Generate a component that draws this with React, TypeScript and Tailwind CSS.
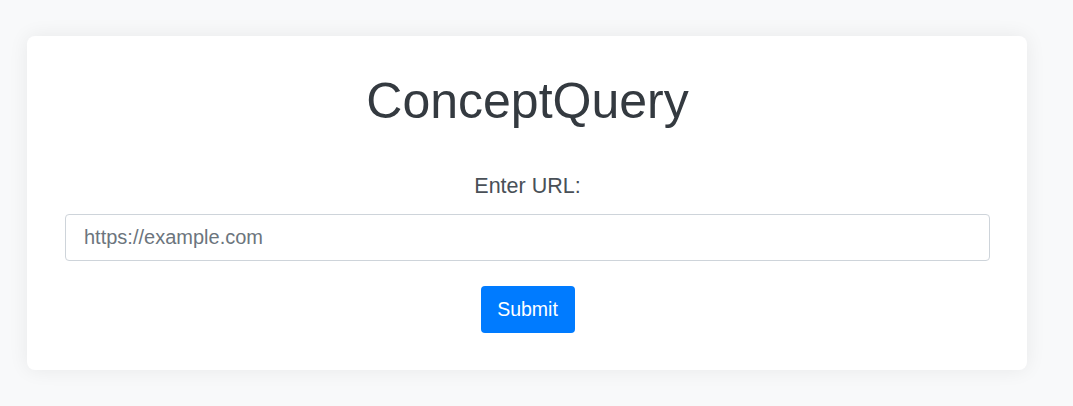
import React, { useState } from 'react';

export default function App() {
  const [url, setUrl] = useState('');

  return (
    <div className="min-h-screen bg-[#f8f9fa] pt-[36px] pl-[27px]" style={{ fontFamily: '"Liberation Sans", Arial, sans-serif' }}>
      <div className="w-[1000px] bg-white rounded-lg shadow-[0_0_20px_rgba(0,0,0,0.07)] pt-[36px] pb-[37px] pl-[38px] pr-[37px]">
        <h1 className="text-center text-[50px] leading-[58px] text-[#343a40]">ConceptQuery</h1>
        <form
          className="mt-[41px] flex flex-col items-center"
          onSubmit={(e) => e.preventDefault()}
        >
          <label htmlFor="url" className="text-[21.5px] leading-[30px] text-[#495057]">
            Enter URL:
          </label>
          <input
            id="url"
            type="text"
            value={url}
            onChange={(e) => setUrl(e.target.value)}
            placeholder="https://example.com"
            className="mt-[13px] w-full h-[47px] px-[18px] text-[20px] text-[#495057] placeholder:text-[#6c757d] border border-[#ced4da] rounded-[4px] focus:outline-none"
          />
          <button
            type="submit"
            className="mt-[25px] h-[47px] w-[94px] bg-[#007bff] text-white text-[19.5px] rounded-[4px]"
          >
            Submit
          </button>
        </form>
      </div>
    </div>
  );
}
